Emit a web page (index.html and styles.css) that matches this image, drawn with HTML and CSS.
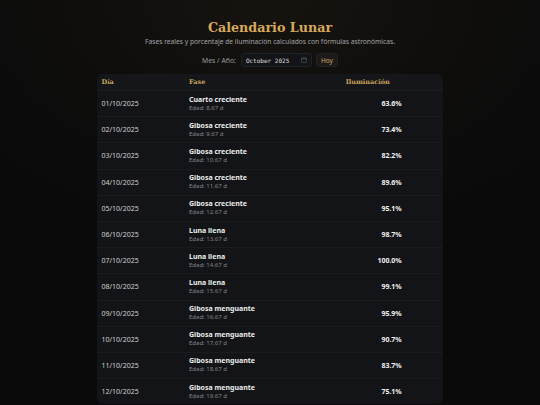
FILE: index.html
```html
<!DOCTYPE html>
<html lang="es">
<head>
<meta charset="utf-8">
<title>Calendario Lunar</title>
<link rel="stylesheet" href="styles.css">
</head>
<body>
<main class="page">
  <h1 class="title">Calendario Lunar</h1>
  <p class="subtitle">Fases reales y porcentaje de iluminación calculados con fórmulas astronómicas.</p>
  <div class="controls">
    <label class="label">Mes / Año:</label>
    <div class="month-input">
      <span class="month-text">October 2025</span>
      <svg class="cal-icon" width="6" height="6" viewBox="0 0 6 6"><rect x="0.5" y="1" width="5" height="4.5" rx="0.6" fill="none" stroke="#4a4a4e" stroke-width="0.8"/><rect x="0.5" y="1" width="5" height="1.3" fill="#4a4a4e"/></svg>
    </div>
    <button class="btn">Hoy</button>
  </div>
  <section class="card">
    <div class="row head">
      <div>Día</div><div>Fase</div><div>Iluminación</div>
    </div>
    <div class="row"><div class="date">01/10/2025</div><div class="phase"><span class="name">Cuarto creciente</span><span class="age">Edad: 8.67 d</span></div><div class="ill"><span class="pct">63.6%</span></div></div>
    <div class="row"><div class="date">02/10/2025</div><div class="phase"><span class="name">Gibosa creciente</span><span class="age">Edad: 9.67 d</span></div><div class="ill"><span class="pct">73.4%</span></div></div>
    <div class="row"><div class="date">03/10/2025</div><div class="phase"><span class="name">Gibosa creciente</span><span class="age">Edad: 10.67 d</span></div><div class="ill"><span class="pct">82.2%</span></div></div>
    <div class="row"><div class="date">04/10/2025</div><div class="phase"><span class="name">Gibosa creciente</span><span class="age">Edad: 11.67 d</span></div><div class="ill"><span class="pct">89.6%</span></div></div>
    <div class="row"><div class="date">05/10/2025</div><div class="phase"><span class="name">Gibosa creciente</span><span class="age">Edad: 12.67 d</span></div><div class="ill"><span class="pct">95.1%</span></div></div>
    <div class="row"><div class="date">06/10/2025</div><div class="phase"><span class="name">Luna llena</span><span class="age">Edad: 13.67 d</span></div><div class="ill"><span class="pct">98.7%</span></div></div>
    <div class="row"><div class="date">07/10/2025</div><div class="phase"><span class="name">Luna llena</span><span class="age">Edad: 14.67 d</span></div><div class="ill"><span class="pct">100.0%</span></div></div>
    <div class="row"><div class="date">08/10/2025</div><div class="phase"><span class="name">Luna llena</span><span class="age">Edad: 15.67 d</span></div><div class="ill"><span class="pct">99.1%</span></div></div>
    <div class="row"><div class="date">09/10/2025</div><div class="phase"><span class="name">Gibosa menguante</span><span class="age">Edad: 16.67 d</span></div><div class="ill"><span class="pct">95.9%</span></div></div>
    <div class="row"><div class="date">10/10/2025</div><div class="phase"><span class="name">Gibosa menguante</span><span class="age">Edad: 17.67 d</span></div><div class="ill"><span class="pct">90.7%</span></div></div>
    <div class="row"><div class="date">11/10/2025</div><div class="phase"><span class="name">Gibosa menguante</span><span class="age">Edad: 18.67 d</span></div><div class="ill"><span class="pct">83.7%</span></div></div>
    <div class="row"><div class="date">12/10/2025</div><div class="phase"><span class="name">Gibosa menguante</span><span class="age">Edad: 19.67 d</span></div><div class="ill"><span class="pct">75.1%</span></div></div>
  </section>
</main>
</body>
</html>
```

FILE: styles.css
```css
html, body {
  margin: 0;
  height: 100%;
}
body {
  background: radial-gradient(ellipse 70% 60% at 50% 0%, #17140f 0%, #0e0d0c 55%, #0a0a0a 100%);
  background-color: #0a0a0a;
  font-family: "Noto Sans", "Open Sans", sans-serif;
  color: #e6e6e6;
  overflow: hidden;
}
.page {
  display: flex;
  flex-direction: column;
  align-items: center;
  padding-top: 20px;
}
.title {
  margin: 0;
  font-family: "DejaVu Serif", serif;
  font-weight: bold;
  font-size: 12.7px;
  line-height: 16px;
  color: #d8a95b;
}
.subtitle {
  margin: 1px 0 0;
  font-size: 6.7px;
  line-height: 10px;
  color: #a3a3a6;
}
.controls {
  margin-top: 6px;
  display: flex;
  align-items: center;
  gap: 4px;
  height: 14px;
}
.label {
  font-size: 6.8px;
  color: #9a9a9d;
  margin-right: 1px;
}
.month-input {
  box-sizing: border-box;
  width: 71px;
  height: 14px;
  display: flex;
  align-items: center;
  justify-content: space-between;
  padding: 0 4px 0 4px;
  background: #131418;
  border: 1px solid #222328;
  border-radius: 3px;
}
.month-text {
  font-family: "DejaVu Sans Mono", monospace;
  font-size: 6px;
  color: #dcdcdc;
}
.cal-icon {
  display: block;
}
.btn {
  box-sizing: border-box;
  height: 14px;
  width: 22px;
  padding: 0;
  font-family: "Noto Sans", sans-serif;
  font-size: 6.5px;
  color: #d2a460;
  background: #1b1a18;
  border: 1px solid #24221e;
  border-radius: 3px;
}
.card {
  margin-top: 7px;
  width: 346px;
  background: #131417;
  border-radius: 6px;
  overflow: hidden;
}
.row {
  display: grid;
  grid-template-columns: 87.5px 156.7px 1fr;
  align-items: center;
  box-sizing: border-box;
  height: 26.2px;
  padding: 0 4.5px;
  border-top: 1px solid #1a1b1f;
}
.row.head {
  height: 16px;
  border-top: none;
  background: #151619;
  font-family: "DejaVu Serif", serif;
  font-weight: bold;
  font-size: 6.5px;
  color: #c9a35c;
}
.date {
  font-size: 7px;
  color: #d0d0d2;
}
.phase {
  display: flex;
  flex-direction: column;
}
.name {
  font-size: 7px;
  line-height: 9px;
  font-weight: bold;
  color: #ececec;
}
.age {
  font-size: 6px;
  line-height: 9px;
  color: #85858a;
}
.ill {
  display: flex;
}
.pct {
  width: 56px;
  text-align: right;
  font-size: 7px;
  font-weight: bold;
  color: #f0f0f0;
}
```
